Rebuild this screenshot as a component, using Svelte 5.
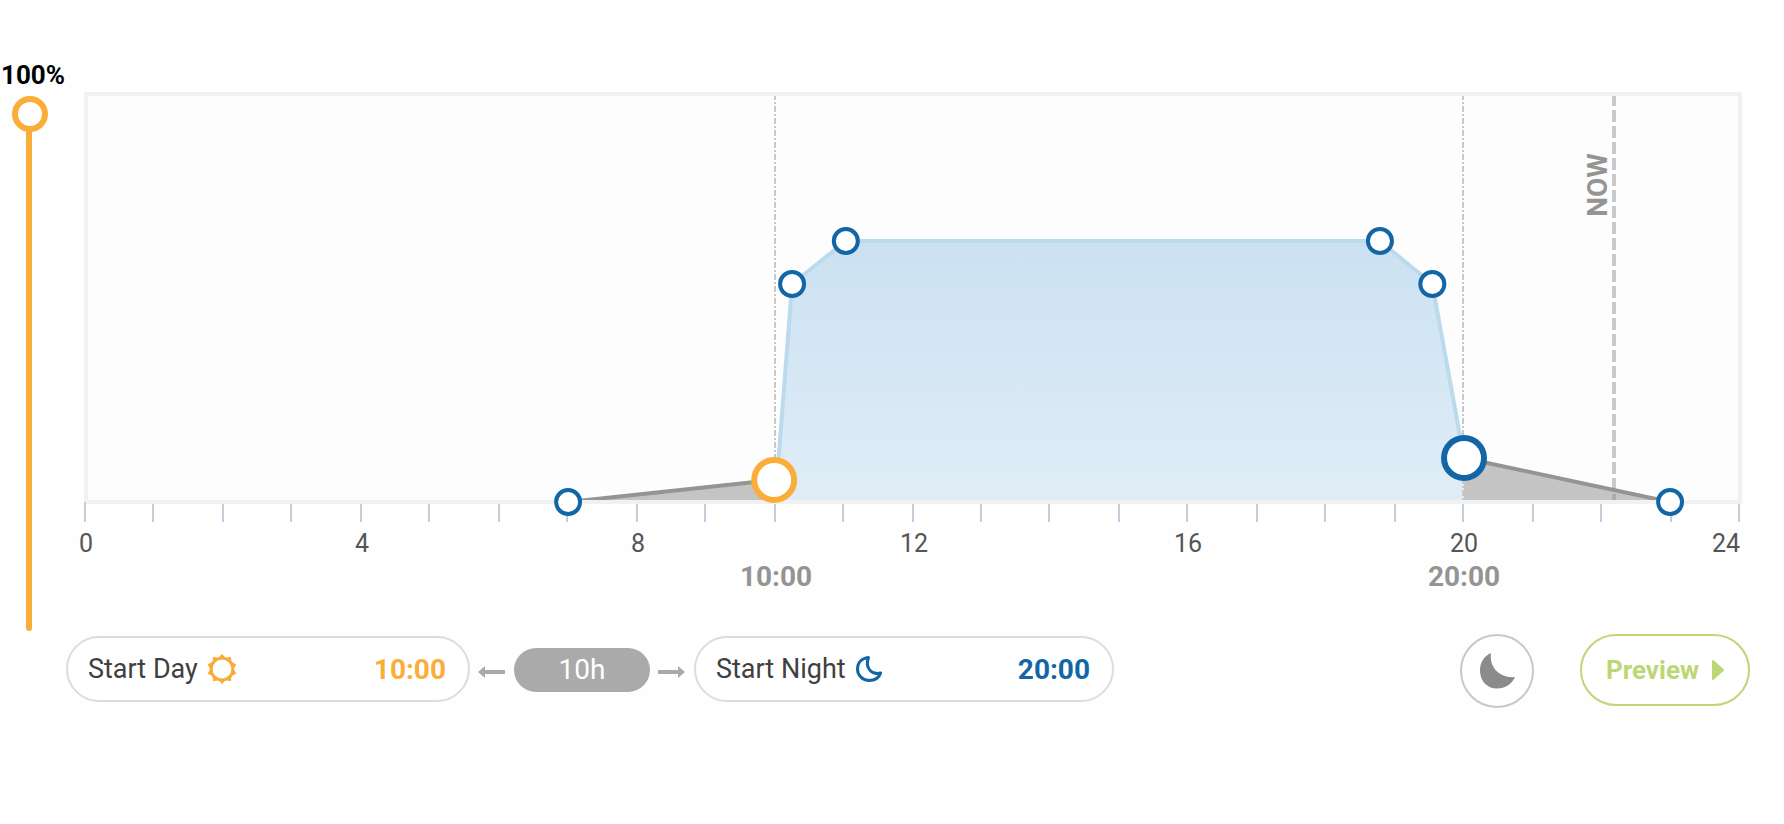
<script>
    let width = $state(1658);
    let level = $state(100);
    let startDay = $state("10:00");
    let startNight = $state("20:00");

    const hours = Array.from({length: 25}, (_, i) => i);
    const labels = [0, 4, 8, 12, 16, 20, 24];
    const now = 22.19;

    // hour + height inside the plot (0 = top border, 410 = axis)
    const dawn = {h: 7.01, y: 410};
    const day = {h: 10, y: 388};
    const night = {h: 20.01, y: 366};
    const dusk = {h: 23, y: 410};
    const curve = [
        {h: 10.26, y: 192},
        {h: 11.04, y: 149},
        {h: 18.79, y: 149},
        {h: 19.55, y: 192},
    ];
    const daylight = [{h: 10.04, y: 388}, ...curve, night];

    let step = $derived((width - 4) / 24);

    function x(h) {
        return 1 + h * step;
    }

    // keeps the thin vertical lines on whole pixels
    function snap(h) {
        return 1 + 2 * Math.round(h * step / 2);
    }

    function path(points) {
        return points.map((p) => `${x(p.h)},${p.y}`).join(" ");
    }

    function anchor(h) {
        return h === 24 ? "end" : "middle";
    }
</script>

<main>
    <div class="top">
        <div class="level">
            <label for="level">{level}%</label>
            <input id="level" type="range" min="0" max="100" bind:value={level}>
        </div>

        <div class="chart" bind:clientWidth={width}>
            <svg width="100%" height="500" role="img" aria-label="Light schedule">
                <defs>
                    <linearGradient id="sky" x1="0" y1="0" x2="0" y2="1">
                        <stop offset="0" stop-color="#cbe1f1" />
                        <stop offset="1" stop-color="#e0edf7" />
                    </linearGradient>
                    <clipPath id="inside">
                        <rect x="4" y="4" width={width - 8} height="404" />
                    </clipPath>
                </defs>

                <rect class="plot" x="2" y="2" width={width - 4} height="408" />

                {#each hours as h}
                    <line class="tick" x1={snap(h)} x2={snap(h)} y1={h === 0 ? 410 : 412} y2="430" />
                {/each}

                <g clip-path="url(#inside)">
                    <polygon fill="url(#sky)" points="{x(10.04)},408 {path(daylight)} {x(20.01)},408" />
                    <line class="edge" x1={snap(10)} x2={snap(10)} y1="4" y2="408" />
                    <line class="edge" x1={snap(20)} x2={snap(20)} y1="4" y2="408" />
                    <line class="now" x1={snap(now) - 1} x2={snap(now) - 1} y1="4" y2="408" />
                    <polyline class="light" points={path(daylight)} />

                    <polygon class="dark" points={path([dawn, day, {h: day.h, y: 410}])} />
                    <polygon class="dark" points={path([night, dusk, {h: night.h, y: 410}])} />
                    <polyline class="fade" points={path([dawn, day])} />
                    <polyline class="fade" points={path([night, dusk])} />
                </g>

                {#each [dawn, ...curve, dusk] as p}
                    <circle class="dot" cx={x(p.h)} cy={p.y} r="12" />
                {/each}
                <circle class="dot big sun" cx={x(day.h)} cy={day.y} r="20" />
                <circle class="dot big" cx={x(night.h)} cy={night.y} r="20" />

                {#each labels as h}
                    <text class="hour" x={snap(h) + 1} y="460" text-anchor={anchor(h)}>{h}</text>
                {/each}
                <text class="time" x={snap(10) + 1} y="494" text-anchor="middle">{startDay}</text>
                <text class="time" x={snap(20) + 1} y="494" text-anchor="middle">{startNight}</text>
                <text class="time" text-anchor="middle" transform="translate({x(now) - 7} 93) rotate(-90)">NOW</text>
            </svg>
        </div>
    </div>

    <div class="controls">
        <label class="field">
            Start Day
            <svg width="30" height="30" viewBox="-15 -15 30 30">
                <circle r="10.8" fill="none" stroke="#f9ab38" stroke-width="2.8" />
                {#each Array(10) as _, i}
                    <path d="M-4 -10.8 L0 -15 L4 -10.8Z" fill="#f9ab38" transform="rotate({i * 36})" />
                {/each}
            </svg>
            <input class="day" type="text" bind:value={startDay}>
        </label>

        <svg class="arrow" width="28" height="14" viewBox="0 0 28 14">
            <path d="M0 7 L7 1 V5 H27 V9 H7 V13Z" fill="#aaa" />
        </svg>
        <output>10h</output>
        <svg class="arrow" width="28" height="14" viewBox="0 0 28 14">
            <path d="M27 7 L20 1 V5 H0 V9 H20 V13Z" fill="#aaa" />
        </svg>

        <label class="field wide">
            Start Night
            <svg width="28" height="28" viewBox="0 0 28 28">
                <path d="M13.5 2.6 C6.5 3.4 2.5 8 2.5 14 C2.5 20.5 7.8 25.5 14 25.5 C19.5 25.5 24 23 25.6 18 C17 20.5 9.5 13 13.5 2.6Z" fill="none" stroke="#1366a6" stroke-width="3" stroke-linejoin="round" />
            </svg>
            <input class="night" type="text" bind:value={startNight}>
        </label>

        <button class="moon" aria-label="Moonlight">
            <svg width="36" height="36" viewBox="0 0 36 36">
                <path d="M12 0 C5 3 1 9.5 1 17.5 C1 28 8 35.5 18 35.5 C26 35.5 33 31 36 24 C21 25.5 10 14.5 12 0Z" fill="#8b8b8b" />
            </svg>
        </button>
        <button class="preview">
            Preview
            <svg width="12" height="20" viewBox="0 0 12 20">
                <path d="M1 1 L11 10 L1 19Z" fill="#bdd676" stroke="#bdd676" stroke-width="2" stroke-linejoin="round" />
            </svg>
        </button>
    </div>
</main>

<style>
    :global(body) {
        margin: 0;
        background: #fefefe;
    }

    main {
        padding: 60px 34px 60px 0;
        font-family: Roboto, "Liberation Sans", sans-serif;
        font-size: 26px;
        color: #404040;
    }

    .top {
        display: flex;
        align-items: flex-start;
    }

    .level {
        display: flex;
        flex-direction: column;
        width: 84px;
    }

    .level label {
        padding-left: 1px;
        font-weight: 700;
        line-height: 30px;
        color: #000;
    }

    .level input {
        appearance: none;
        writing-mode: vertical-lr;
        direction: rtl;
        width: 36px;
        height: 535px;
        margin: 6px 0 0 11px;
        background: transparent;
    }

    .level input::-webkit-slider-runnable-track {
        width: 6px;
        border-radius: 3px;
        background: #fbad3a;
    }

    .level input::-webkit-slider-thumb {
        appearance: none;
        box-sizing: border-box;
        width: 36px;
        height: 36px;
        margin-left: -14px;
        border: 6px solid #fbad3a;
        border-radius: 50%;
        background: #fff;
    }

    .chart {
        flex: 1;
        min-width: 0;
        margin: 32px 8px 0 0;
    }

    .chart svg {
        display: block;
        overflow: visible;
    }

    .plot {
        fill: #fdfdfd;
        stroke: #f1f1f1;
        stroke-width: 4;
    }

    .tick {
        stroke: #c1cedb;
        stroke-width: 2;
    }

    .edge {
        stroke: #c8c8c8;
        stroke-width: 2;
        stroke-dasharray: 6 2 2 2;
        stroke-dashoffset: 2;
    }

    .now {
        stroke: #cacaca;
        stroke-width: 4;
        stroke-dasharray: 12 4;
        stroke-dashoffset: 2;
    }

    .light {
        fill: none;
        stroke: #bcdaee;
        stroke-width: 4;
    }

    .dark {
        fill: #969696;
        fill-opacity: 0.55;
    }

    .fade {
        fill: none;
        stroke: #949494;
        stroke-width: 4;
    }

    .dot {
        fill: #fff;
        stroke: #1366a6;
        stroke-width: 4;
    }

    .big {
        stroke-width: 6;
    }

    .sun {
        stroke: #fbad3a;
    }

    .hour {
        font-size: 25px;
        fill: #555;
    }

    .time {
        font-size: 28px;
        font-weight: 700;
        fill: #949494;
    }

    .controls {
        display: flex;
        align-items: center;
        margin-top: 3px;
        padding-left: 66px;
    }

    .field {
        display: flex;
        align-items: center;
        box-sizing: border-box;
        width: 404px;
        height: 66px;
        margin-bottom: 4px;
        padding: 0 22px 0 20px;
        border: 2px solid #dcdcdc;
        border-radius: 33px;
        background: #fff;
        font-size: 27px;
    }

    .wide {
        width: 420px;
    }

    .field svg {
        margin-left: 9px;
    }

    .field input {
        flex: 1;
        min-width: 0;
        padding: 0;
        border: 0;
        background: transparent;
        font: inherit;
        font-size: 28px;
        font-weight: 700;
        text-align: right;
    }

    .field .day {
        color: #fbad3a;
    }

    .field .night {
        color: #1366a6;
    }

    .arrow {
        margin: 2px 8px 0;
    }

    output {
        width: 136px;
        margin-bottom: 2px;
        border-radius: 22px;
        background: #aaa;
        color: #fff;
        font-size: 28px;
        line-height: 44px;
        text-align: center;
    }

    button {
        box-sizing: border-box;
        padding: 0;
        background: #fff;
        font: inherit;
        cursor: pointer;
    }

    .moon {
        display: flex;
        align-items: center;
        justify-content: center;
        width: 74px;
        height: 74px;
        margin-left: auto;
        border: 2px solid #c8c8c8;
        border-radius: 50%;
    }

    .preview {
        display: flex;
        align-items: center;
        justify-content: center;
        gap: 13px;
        width: 170px;
        height: 72px;
        margin: 0 0 2px 46px;
        border: 2px solid #bdd676;
        border-radius: 36px;
        color: #bdd676;
        font-weight: 700;
    }
</style>
